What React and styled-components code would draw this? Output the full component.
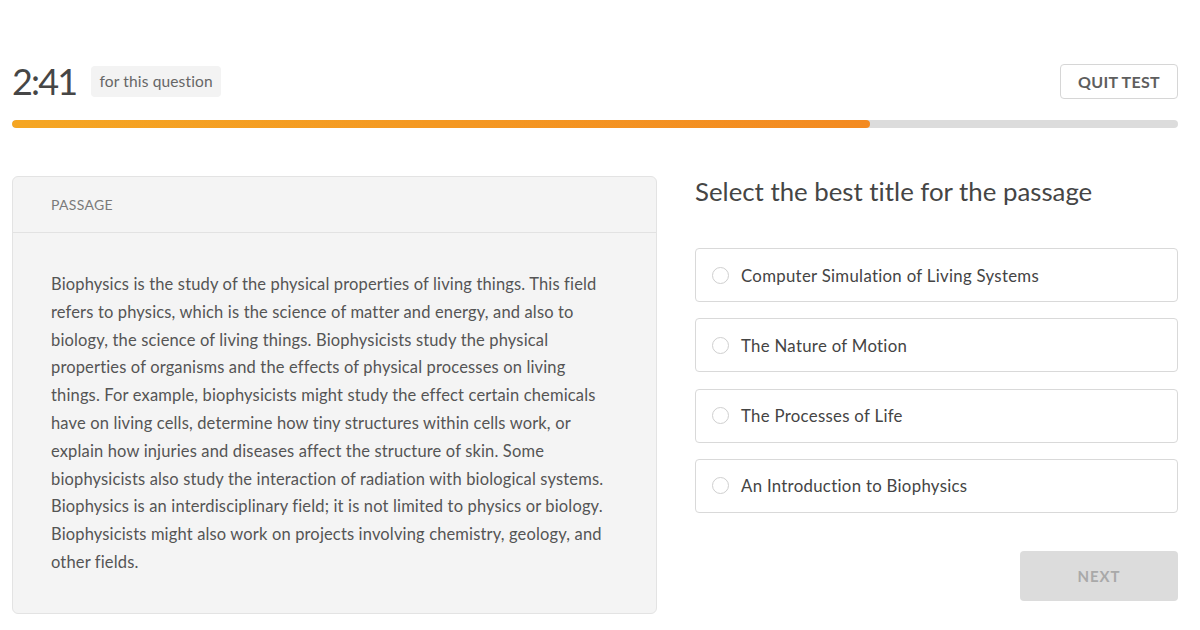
import React, { useState } from "react";
import styled, { createGlobalStyle } from "styled-components";

const GlobalStyle = createGlobalStyle`
  html, body {
    margin: 0;
    padding: 0;
    background: #fff;
    font-family: Lato, "Open Sans", "Liberation Sans", sans-serif;
    font-variant-ligatures: none;
    color: #4a4a4a;
  }
  * { box-sizing: border-box; }
`;

const Page = styled.div`
  width: 1200px;
  height: 630px;
  padding: 64px 22px 0 12px;
`;

const TopBar = styled.div`
  display: flex;
  align-items: center;
  justify-content: space-between;
  height: 34px;
`;

const TimerGroup = styled.div`
  display: flex;
  align-items: center;
  gap: 15px;
`;

const Timer = styled.span`
  font-size: 36px;
  font-weight: 400;
  line-height: 34px;
  color: #464646;
  letter-spacing: -1.8px;
`;

const Pill = styled.span`
  background: #f3f3f3;
  border-radius: 4px;
  padding: 0 8px;
  height: 31px;
  line-height: 31px;
  font-size: 15.5px;
  letter-spacing: 0.15px;
  color: #666;
`;

const QuitButton = styled.button`
  font-family: inherit;
  background: #fff;
  border: 1px solid #d6d6d6;
  border-radius: 4px;
  height: 35px;
  width: 118px;
  font-size: 16px;
  font-weight: 700;
  color: #5e5e5e;
  letter-spacing: 0.3px;
`;

const Track = styled.div`
  margin-top: 22px;
  height: 8px;
  border-radius: 4px;
  background: #dcdcdc;
  overflow: hidden;
`;

const Fill = styled.div`
  height: 100%;
  border-radius: 4px;
  background: linear-gradient(90deg, #f5a623 0%, #f38a21 100%);
`;

const Main = styled.div`
  display: grid;
  grid-template-columns: 645px 1fr;
  gap: 38px;
  margin-top: 48px;
`;

const Card = styled.section`
  background: #f4f4f4;
  border: 1px solid #e3e3e3;
  border-radius: 6px;
  height: 438px;
`;

const CardHeader = styled.div`
  height: 56px;
  display: flex;
  align-items: center;
  padding: 0 38px;
  border-bottom: 1px solid #e2e2e2;
  font-size: 14px;
  color: #7a7a7a;
  letter-spacing: 0.3px;
`;

const CardBody = styled.p`
  margin: 0;
  padding: 38px 40px 0 38px;
  font-size: 16.5px;
  letter-spacing: 0.15px;
  line-height: 27.8px;
  color: #555;
`;

const Side = styled.div`
  display: flex;
  flex-direction: column;
`;

const Question = styled.h2`
  margin: 0;
  font-size: 25.8px;
  font-weight: 400;
  color: #454545;
  line-height: 30px;
`;

const Options = styled.div`
  display: flex;
  flex-direction: column;
  gap: 16.3px;
  margin-top: 42px;
`;

const Option = styled.label`
  display: flex;
  align-items: center;
  gap: 12px;
  height: 54px;
  padding: 0 16px;
  border: 1px solid ${(p) => (p.$checked ? "#f38a21" : "#d9d9d9")};
  border-radius: 4px;
  background: #fff;
  font-size: 16.8px;
  letter-spacing: 0.3px;
  color: #444;
  cursor: pointer;
`;

const Radio = styled.span`
  width: 17px;
  height: 17px;
  border-radius: 50%;
  border: 1.5px solid #cfcfcf;
  background: ${(p) => (p.$checked ? "#f38a21" : "#fff")};
`;

const Footer = styled.div`
  display: flex;
  justify-content: flex-end;
  margin-top: 38px;
`;

const NextButton = styled.button`
  font-family: inherit;
  width: 158px;
  height: 50px;
  border: none;
  border-radius: 4px;
  background: #dcdcdc;
  color: #a9a9a9;
  font-size: 15px;
  font-weight: 700;
  letter-spacing: 1px;
`;

const passage =
  "Biophysics is the study of the physical properties of living things. This field refers to physics, which is the science of matter and energy, and also to biology, the science of living things. Biophysicists study the physical properties of organisms and the effects of physical processes on living things. For example, biophysicists might study the effect certain chemicals have on living cells, determine how tiny structures within cells work, or explain how injuries and diseases affect the structure of skin. Some biophysicists also study the interaction of radiation with biological systems. Biophysics is an interdisciplinary field; it is not limited to physics or biology. Biophysicists might also work on projects involving chemistry, geology, and other fields.";

const answers = [
  "Computer Simulation of Living Systems",
  "The Nature of Motion",
  "The Processes of Life",
  "An Introduction to Biophysics",
];

const App = () => {
  const [picked, setPicked] = useState(null);
  const progress = 73.6;

  return (
    <Page>
      <GlobalStyle />
      <TopBar>
        <TimerGroup>
          <Timer>2:41</Timer>
          <Pill>for this question</Pill>
        </TimerGroup>
        <QuitButton>QUIT TEST</QuitButton>
      </TopBar>
      <Track>
        <Fill style={{ width: `${progress}%` }} />
      </Track>

      <Main>
        <Card>
          <CardHeader>PASSAGE</CardHeader>
          <CardBody>{passage}</CardBody>
        </Card>

        <Side>
          <Question>Select the best title for the passage</Question>
          <Options>
            {answers.map((a, i) => (
              <Option key={a} $checked={picked === i} onClick={() => setPicked(i)}>
                <Radio $checked={picked === i} />
                {a}
              </Option>
            ))}
          </Options>
          <Footer>
            <NextButton disabled={picked === null}>NEXT</NextButton>
          </Footer>
        </Side>
      </Main>
    </Page>
  );
};

export default App;
